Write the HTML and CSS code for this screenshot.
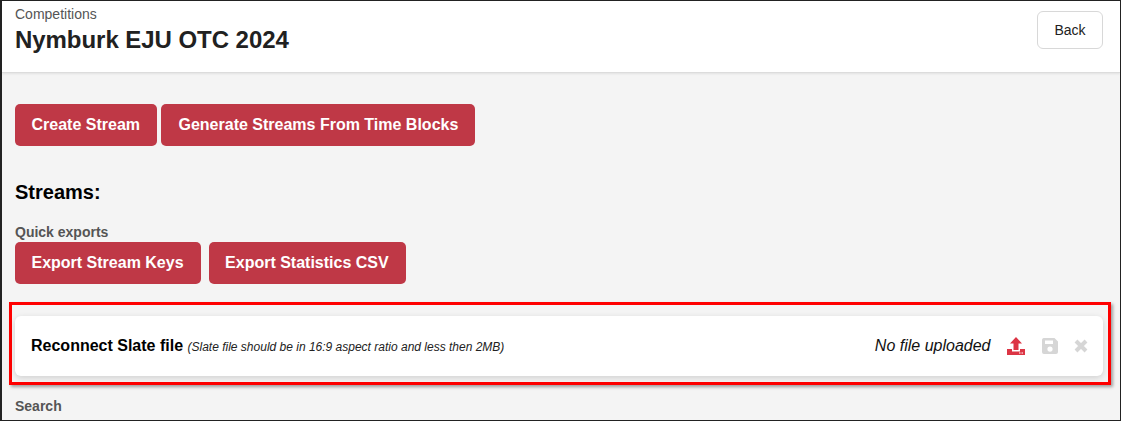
FILE: index.html
```html
<!DOCTYPE html>
<html lang="en">
<head>
  <meta charset="UTF-8" />
  <title>Nymburk EJU OTC 2024</title>
  <link rel="stylesheet" href="styles.css">
</head>
<body>
  <div class="frame">
    <header class="top-bar">
      <div>
        <div class="crumb">Competitions</div>
        <h1 class="title">Nymburk EJU OTC 2024</h1>
      </div>
      <button class="back-btn">Back</button>
    </header>

    <main class="content">
      <div class="btn-row">
        <button class="btn">Create Stream</button>
        <button class="btn btn-wide">Generate Streams From Time Blocks</button>
      </div>

      <h2 class="section-title">Streams:</h2>

      <div class="field-label">Quick exports</div>
      <div class="btn-row btn-row-spaced">
        <button class="btn">Export Stream Keys</button>
        <button class="btn">Export Statistics CSV</button>
      </div>

      <div class="highlight">
        <div class="slate-card">
          <div class="slate-info">
            <span class="slate-name">Reconnect Slate file</span>
            <span class="slate-hint">(Slate file should be in 16:9 aspect ratio and less then 2MB)</span>
          </div>
          <div class="slate-actions">
            <span class="slate-status">No file uploaded</span>
            <svg class="icon" width="20" height="20" viewBox="0 0 20 20">
              <path fill="#dc3545" d="M10 1 L16 7.5 H12.5 V14 H7.5 V7.5 H4 Z" />
              <path fill="#dc3545" d="M1 13 H6 V15.5 H14 V13 H19 V19 H1 Z" />
              <rect fill="#fff" x="13" y="16.5" width="1.5" height="1" />
              <rect fill="#fff" x="15.5" y="16.5" width="1.5" height="1" />
            </svg>
            <svg class="icon" width="18" height="18" viewBox="0 0 18 18">
              <path fill="#d6d6d6" fill-rule="evenodd" d="M2.5 1 H13.5 L17 4.5 V15 A2 2 0 0 1 15 17 H3 A2 2 0 0 1 1 15 V3 A2 2 0 0 1 2.5 1 Z M4 3.5 V7 H12 V3.5 Z M9 9.5 A2.6 2.6 0 1 0 9 14.7 A2.6 2.6 0 1 0 9 9.5 Z" />
            </svg>
            <svg class="icon" width="14" height="14" viewBox="0 0 14 14">
              <path stroke="#d6d6d6" stroke-width="4" d="M2 2 L12 12 M12 2 L2 12" />
            </svg>
          </div>
        </div>
      </div>

      <div class="field-label search-label">Search</div>
    </main>
  </div>
</body>
</html>
```
FILE: styles.css
```css
* {
  box-sizing: border-box;
}

html, body {
  margin: 0;
  height: 100%;
}

body {
  font-family: "Liberation Sans", Arial, sans-serif;
  overflow: hidden;
}

.frame {
  width: 1121px;
  height: 421px;
  border: 1px solid #222;
  border-left-width: 2px;
  background-color: #f4f4f4;
  overflow: hidden;
}

.top-bar {
  height: 72px;
  background-color: white;
  border-bottom: 1px solid #dcdcdc;
  box-shadow: 0 1px 2px rgba(0,0,0,0.08);
  padding: 5px 17px 0 13px;
  display: flex;
  justify-content: space-between;
  align-items: flex-start;
}

.crumb {
  font-size: 14px;
  line-height: 16px;
  color: #555;
}

.title {
  margin: 2px 0 0;
  font-size: 24px;
  line-height: 32px;
  font-weight: bold;
  color: #212121;
  letter-spacing: -0.05px;
}

.back-btn {
  margin-top: 5px;
  width: 66px;
  height: 38px;
  font-family: inherit;
  font-size: 14px;
  color: #212121;
  background-color: white;
  border: 1px solid #d8d8d8;
  border-radius: 6px;
}

.content {
  padding: 31px 8px 0;
}

.btn-row {
  display: flex;
  gap: 4px;
  padding-left: 5px;
}

.btn-row-spaced {
  gap: 8px;
}

.btn {
  height: 42px;
  padding: 0 17px 0 16.5px;
  font-family: inherit;
  font-size: 16px;
  font-weight: bold;
  color: white;
  background-color: #bf3846;
  border: none;
  border-radius: 5px;
}

.btn-wide {
  padding: 0 17px 0 17.5px;
}

.section-title {
  margin: 35px 0 0 5px;
  font-size: 20px;
  line-height: 23px;
  font-weight: bold;
  color: #000;
}

.field-label {
  margin: 20px 0 2px 5px;
  font-size: 14px;
  line-height: 16px;
  font-weight: bold;
  color: #555;
}

.highlight {
  margin: 18px 0 0 -1px;
  width: 1102px;
  height: 83px;
  border: 3px solid #f00;
  box-shadow: 2px 2px 3px rgba(0,0,0,0.35);
  padding: 10px 5px 0 3px;
}

.slate-card {
  height: 60px;
  margin-top: 1px;
  padding: 0 15px 0 16px;
  background-color: white;
  border-radius: 6px;
  box-shadow: 0 2px 6px rgba(0,0,0,0.15);
  display: flex;
  justify-content: space-between;
  align-items: center;
}

.slate-name {
  font-size: 16px;
  font-weight: bold;
  color: #000;
}

.slate-hint {
  font-size: 12px;
  font-style: italic;
  color: #222;
}

.slate-actions {
  display: flex;
  align-items: center;
  gap: 15px;
}

.slate-status {
  font-size: 16px;
  font-style: italic;
  color: #111;
  margin-right: 0.5px;
}

.search-label {
  margin-top: 13px;
}
```
